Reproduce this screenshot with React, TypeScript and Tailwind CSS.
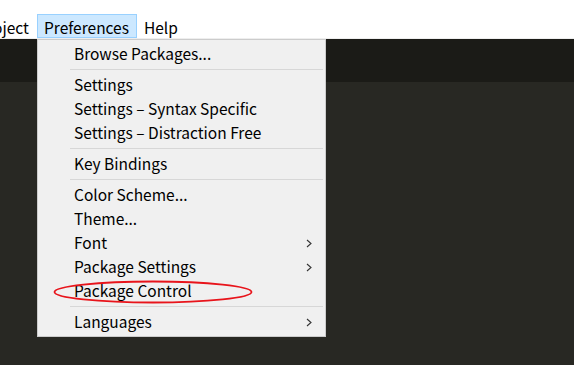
import React from "react";

const font = { fontFamily: '"Noto Sans CJK SC", "Noto Sans", sans-serif' };

function Chevron() {
  return (
    <svg width="6" height="9" viewBox="0 0 6 9" className="absolute right-[13px] top-[8px]">
      <path d="M1 1 L5 4.5 L1 8" fill="none" stroke="#333" strokeWidth="1.1" />
    </svg>
  );
}

function Item({ label, sub }: { label: string; sub?: boolean }) {
  return (
    <div className="relative h-[24px] pl-[36px] flex items-center text-[15.5px] text-[#000] leading-none">
      <span className="mt-[-1px]">{label}</span>
      {sub && <Chevron />}
    </div>
  );
}

function Sep() {
  return (
    <div className="h-[7px] flex items-center pl-[32px] pr-[2px]">
      <div className="h-px w-full bg-[#d7d7d7]" />
    </div>
  );
}

export default function App() {
  return (
    <div className="relative w-[574px] h-[365px] overflow-hidden bg-[#282823]" style={font}>
      <div className="h-[39px] bg-white flex items-end text-[15.5px] text-black border-b border-[#eeeeee]">
        <div className="flex items-center h-[24px] leading-none">
          <span className="ml-[-7px] w-[44px] mt-[3px]">oject</span>
          <span className="h-[24px] w-[100px] px-[6px] pt-[3px] flex items-center bg-[#cce8ff] border border-[#99d1ff]">Preferences</span>
          <span className="ml-[7px] mt-[3px]">Help</span>
        </div>
      </div>
      <div className="h-[43px] bg-[#1b1b17]" />
      <div className="absolute left-[37px] top-[39px] w-[289px] h-[298px] bg-[#f0f0f0] border border-[#cccccc] pt-[2px]">
        <Item label="Browse Packages..." />
        <Sep />
        <Item label="Settings" />
        <Item label="Settings – Syntax Specific" />
        <Item label="Settings – Distraction Free" />
        <Sep />
        <Item label="Key Bindings" />
        <Sep />
        <Item label="Color Scheme..." />
        <Item label="Theme..." />
        <Item label="Font" sub />
        <Item label="Package Settings" sub />
        <Item label="Package Control" />
        <Sep />
        <Item label="Languages" sub />
      </div>
      <svg className="absolute left-[50px] top-[279px]" width="210" height="26" viewBox="0 0 210 26">
        <ellipse cx="103" cy="13" rx="98.5" ry="10.5" fill="none" stroke="#e8141b" strokeWidth="1.8" />
      </svg>
    </div>
  );
}
